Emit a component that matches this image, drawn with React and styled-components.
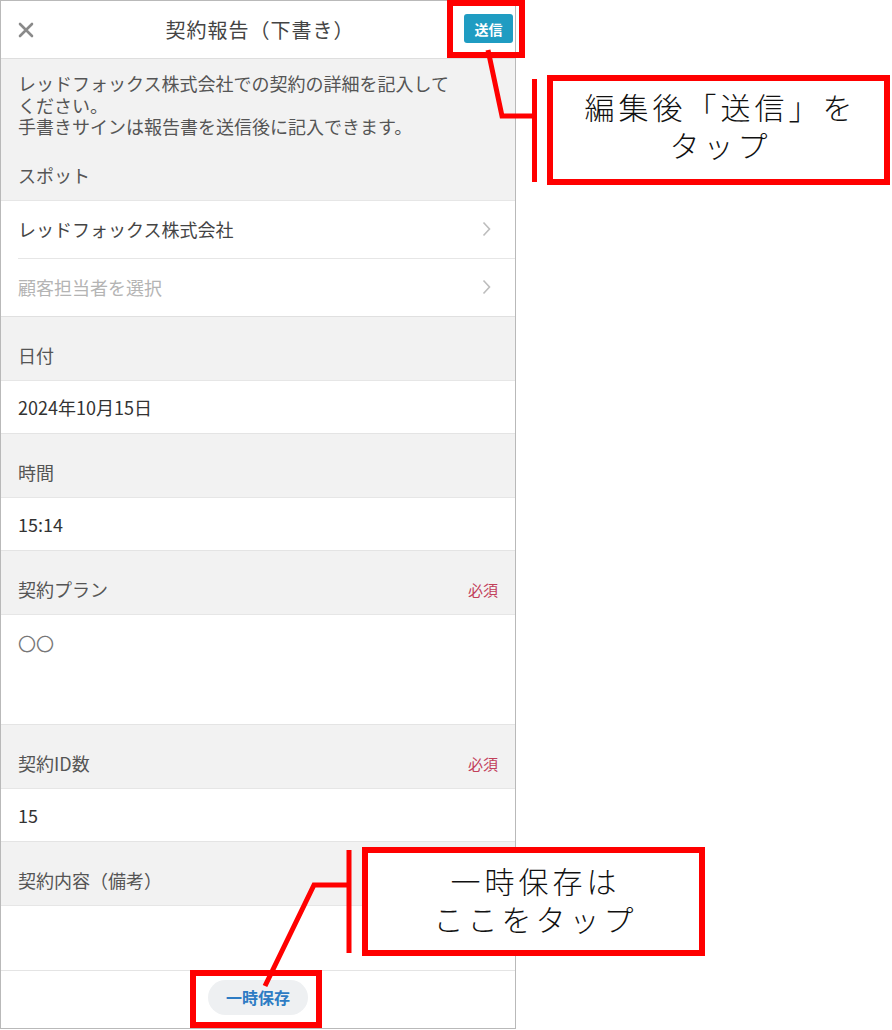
import React from 'react';
import styled, {createGlobalStyle} from 'styled-components';

const GlobalStyle = createGlobalStyle`
  body {
    margin: 0;
    background: #fff;
    font-family: "Noto Sans CJK JP", "Noto Sans", sans-serif;
  }
`

const Canvas = styled.div`
  position: relative;
  width: 892px;
  height: 1030px;
  overflow: hidden;
`

const Phone = styled.div`
  width: 516px;
  height: 1029px;
  box-sizing: border-box;
  border: 1px solid #b9b9b9;
  display: flex;
  flex-direction: column;
  overflow: hidden;
  color: #333;
`

const Header = styled.div`
  height: 57px;
  flex-shrink: 0;
  display: flex;
  align-items: center;
  padding: 0 2px 0 17px;
  border-bottom: 1px solid #dedede;
`

const CloseIcon = styled.svg`
  width: 16px;
  height: 16px;
  flex-shrink: 0;
`

const Title = styled.div`
  flex: 1;
  text-align: center;
  font-size: 20px;
  color: #444;
  padding-left: 22px;
  letter-spacing: 1px;
`

const SendButton = styled.div`
  width: 49px;
  height: 29px;
  margin-top: -2px;
  border-radius: 3px;
  background: #1f9cc2;
  color: #fff;
  font-size: 14px;
  font-weight: 700;
  display: flex;
  align-items: center;
  justify-content: center;
`

const Intro = styled.div`
  background: #f2f2f2;
  padding-top: 14px;
  flex-shrink: 0;
`

const Description = styled.div`
  padding: 0 17px;
  font-size: 18px;
  line-height: 21.5px;
  color: #555;
`

const FieldLabel = styled.div`
  background: #f2f2f2;
  padding: ${p => p.$top || 28}px 17px 14px;
  font-size: 18px;
  line-height: 21px;
  color: #555;
  display: flex;
  justify-content: space-between;
  align-items: center;
  border-bottom: 1px solid #e6e6e6;
  flex-shrink: 0;
`

const Required = styled.span`
  font-size: 15px;
  color: #c2405a;
`

const NavList = styled.div`
  background: #fff;
  border-bottom: 1px solid #e0e0e0;
  flex-shrink: 0;
`

const NavRow = styled.div`
  height: 57px;
  margin-left: 17px;
  padding-right: 24px;
  display: flex;
  align-items: center;
  justify-content: space-between;
  font-size: 18px;
  color: ${p => (p.$placeholder ? '#b4b4b4' : '#444')};
  & + & {
    border-top: 1px solid #e6e6e6;
  }
`

const Chevron = styled.svg`
  width: 9px;
  height: 16px;
`

const ValueRow = styled.div`
  height: 53px;
  box-sizing: border-box;
  padding: 0 17px;
  display: flex;
  align-items: center;
  font-size: 18px;
  color: #333;
  background: #fff;
  border-bottom: 1px solid #e4e4e4;
  flex-shrink: 0;
`

const TextArea = styled.div`
  height: ${p => p.$h}px;
  box-sizing: border-box;
  padding: 15px 17px 0;
  font-size: 18px;
  color: #777;
  background: #fff;
  border-bottom: 1px solid #e4e4e4;
  flex-shrink: 0;
`

const Footer = styled.div`
  flex: 1;
  display: flex;
  justify-content: center;
  padding-top: 9px;
  background: #fff;
`

const SaveButton = styled.div`
  width: 100px;
  height: 35px;
  border-radius: 18px;
  background: #eef0f2;
  color: #2d7cc4;
  font-size: 16px;
  font-weight: 700;
  display: flex;
  align-items: center;
  justify-content: center;
`

const Highlight = styled.div`
  position: absolute;
  left: ${p => p.$x}px;
  top: ${p => p.$y}px;
  width: ${p => p.$w}px;
  height: ${p => p.$h}px;
  box-sizing: border-box;
  border: 6px solid #ff0000;
`

const Callout = styled(Highlight)`
  background: #fff;
  display: flex;
  flex-direction: column;
  align-items: center;
  justify-content: center;
  font-size: 30px;
  font-weight: 300;
  line-height: 38px;
  letter-spacing: 4px;
  color: #111;
  padding: 0 0 ${p => p.$nudge || 5}px 4px;
`

const Connectors = styled.svg`
  position: absolute;
  left: 0;
  top: 0;
  pointer-events: none;
`

const ChevronIcon = () => (
  <Chevron viewBox="0 0 9 16">
    <polyline points="1.5,1.5 7.5,8 1.5,14.5" fill="none" stroke="#bdbdbd" strokeWidth="1.6" />
  </Chevron>
)

export default function App() {
  return (
    <Canvas>
      <GlobalStyle />
      <Phone>
        <Header>
          <CloseIcon viewBox="0 0 16 16">
            <path d="M2 2 L14 14 M14 2 L2 14" stroke="#8a8a8a" strokeWidth="2.6" strokeLinecap="round" />
          </CloseIcon>
          <Title>契約報告（下書き）</Title>
          <SendButton>送信</SendButton>
        </Header>

        <Intro>
          <Description>
            レッドフォックス株式会社での契約の詳細を記入して<br />
            ください。<br />
            手書きサインは報告書を送信後に記入できます。
          </Description>
          <FieldLabel $top={27}>スポット</FieldLabel>
        </Intro>

        <NavList>
          <NavRow>
            レッドフォックス株式会社
            <ChevronIcon />
          </NavRow>
          <NavRow $placeholder>
            顧客担当者を選択
            <ChevronIcon />
          </NavRow>
        </NavList>

        <FieldLabel>日付</FieldLabel>
        <ValueRow>2024年10月15日</ValueRow>

        <FieldLabel>時間</FieldLabel>
        <ValueRow>15:14</ValueRow>

        <FieldLabel>
          契約プラン
          <Required>必須</Required>
        </FieldLabel>
        <TextArea $h={110}>〇〇</TextArea>

        <FieldLabel>
          契約ID数
          <Required>必須</Required>
        </FieldLabel>
        <ValueRow>15</ValueRow>

        <FieldLabel>契約内容（備考）</FieldLabel>
        <TextArea $h={65} />

        <Footer>
          <SaveButton>一時保存</SaveButton>
        </Footer>
      </Phone>

      {/* annotation overlay */}
      <Connectors width="892" height="1030" viewBox="0 0 892 1030">
        <g stroke="#ff0000" strokeWidth="5" fill="none">
          <polyline points="488,50 502,116 534,116" />
          <line x1="534.5" y1="79" x2="534.5" y2="182" />
          <line x1="349" y1="850" x2="349" y2="953" />
          <polyline points="349,885 314,885 265,986" />
        </g>
      </Connectors>
      <Highlight $x={447} $y={0} $w={78} $h={58} />
      <Highlight $x={190} $y={970} $w={132} $h={58} />
      <Callout $x={547} $y={75} $w={343} $h={110} $nudge={10}>
        <div>編集後「送信」を</div>
        <div>タップ</div>
      </Callout>
      <Callout $x={362} $y={847} $w={343} $h={109}>
        <div>一時保存は</div>
        <div>ここをタップ</div>
      </Callout>
    </Canvas>
  );
}
